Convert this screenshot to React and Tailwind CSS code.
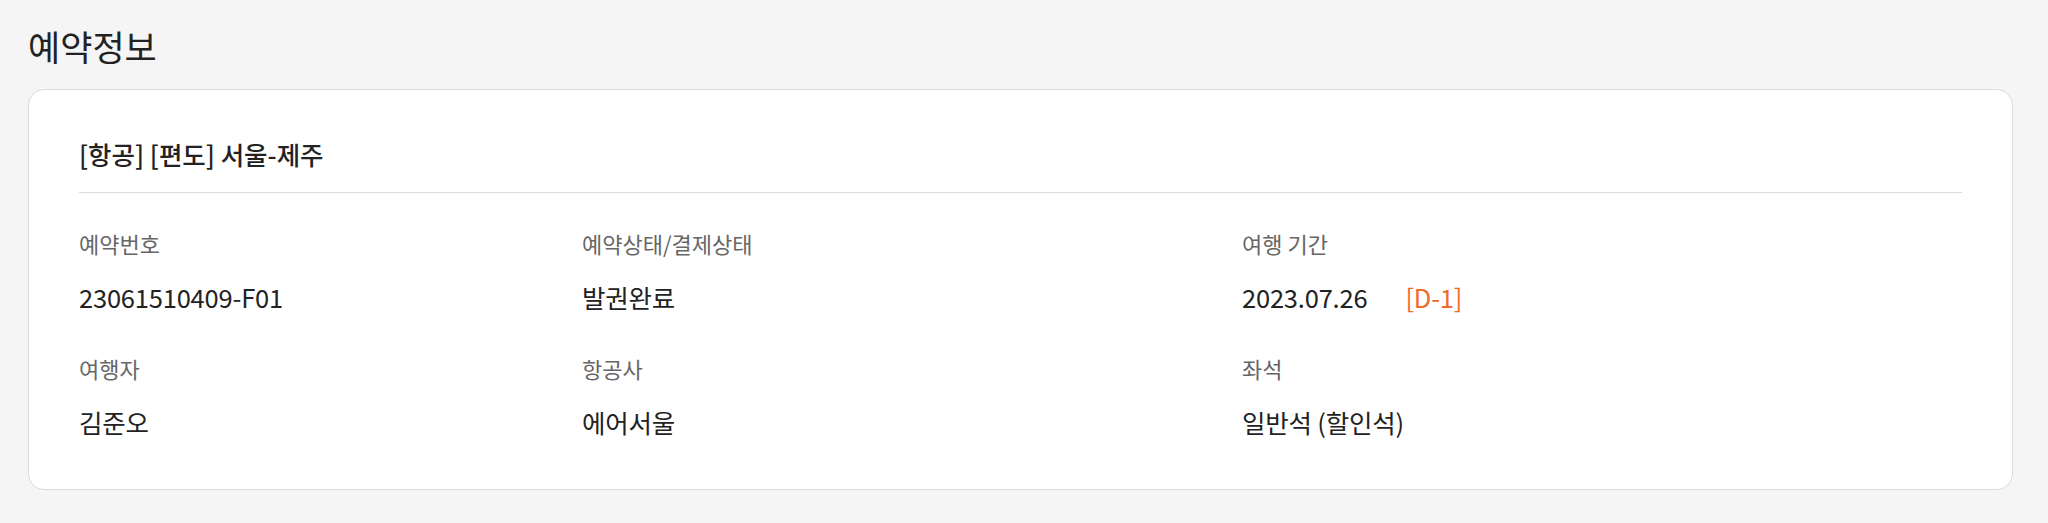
const font = { fontFamily: '"Noto Sans CJK KR", "Noto Sans", sans-serif' };

const rows = [
  [
    { label: '예약번호', value: '23061510409-F01' },
    { label: '예약상태/결제상태', value: '발권완료' },
    { label: '여행 기간', value: '2023.07.26', dday: '[D-1]' },
  ],
  [
    { label: '여행자', value: '김준오' },
    { label: '항공사', value: '에어서울' },
    { label: '좌석', value: '일반석 (할인석)' },
  ],
];

function Field({ label, value, dday }) {
  return (
    <div className="flex flex-col">
      <span className="text-[22px] leading-[30px] text-[#666]">{label}</span>
      <div className="mt-[22px] flex items-center text-[25.5px] leading-[34px] tracking-[-0.2px] text-[#222]">
        <span>{value}</span>
        {dday && <span className="ml-[38px] text-[#ef6b2c]">{dday}</span>}
      </div>
    </div>
  );
}

export default function App() {
  return (
    <div className="min-h-[523px] bg-[#f5f5f5] pl-[28px] pr-[35px] pt-[26px] pb-[31px]" style={font}>
      <h2 className="text-[35px] leading-[40px] font-normal text-[#222]">예약정보</h2>

      <div className="mt-[23px] rounded-[16px] border border-[#dcdcdc] bg-white px-[50px] pt-[47px] pb-[50px]">
        <div className="border-b border-[#dcdcdc] pb-[21px]">
          <h3 className="text-[25.5px] leading-[34px] font-medium text-[#222]">[항공] [편도] 서울-제주</h3>
        </div>

        <div className="mt-[35px] flex flex-col gap-[39px]">
          {rows.map((row, i) => (
            <div key={i} className="grid grid-cols-[503px_660px_1fr]">
              {row.map((f) => (
                <Field key={f.label} {...f} />
              ))}
            </div>
          ))}
        </div>
      </div>
    </div>
  );
}
